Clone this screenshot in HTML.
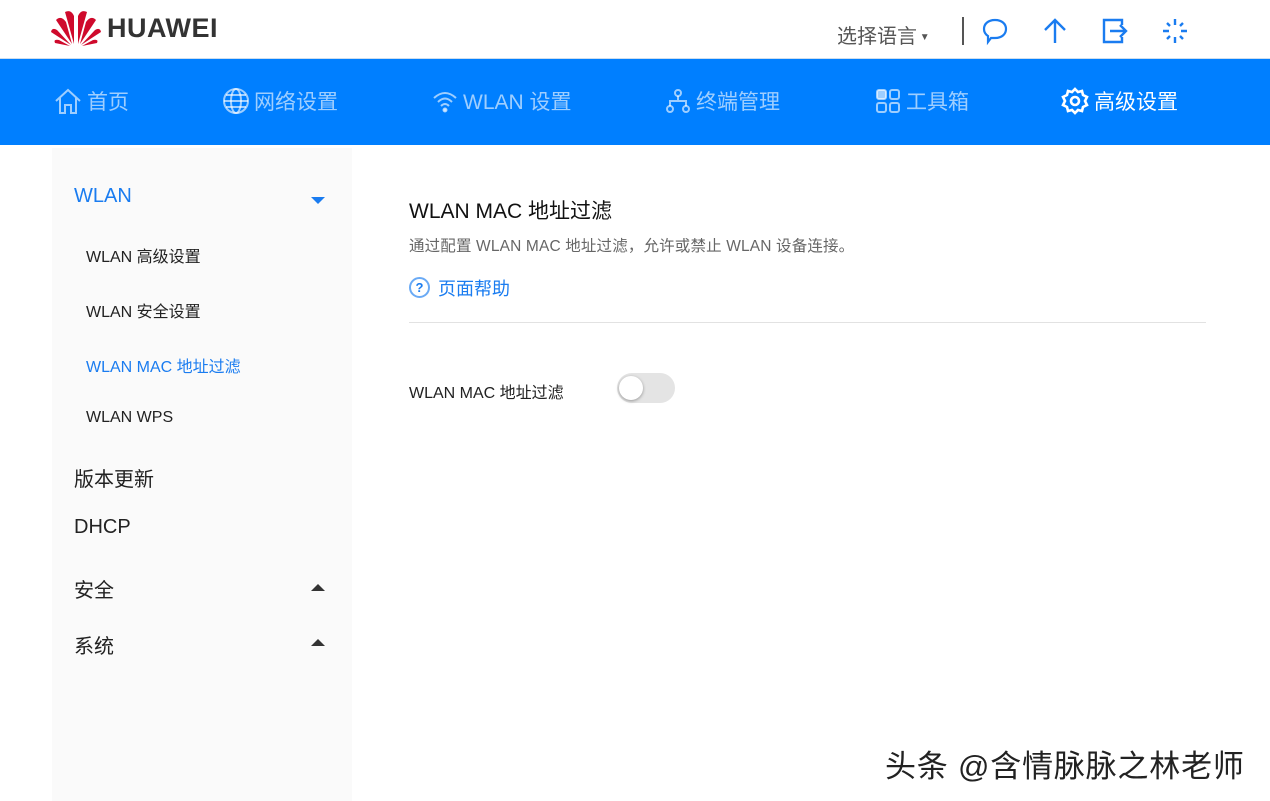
<!DOCTYPE html>
<html><head><meta charset="utf-8"><style>
*{margin:0;padding:0;box-sizing:border-box}
body{width:1270px;height:801px;overflow:hidden;background:#fff;font-family:"Liberation Sans","Noto Sans CJK SC",sans-serif;position:relative;color:#222}
.abs{position:absolute;white-space:nowrap}
.nav{position:absolute;left:0;top:58px;width:1270px;height:87px;background:#007fff;border-top:1px solid #cde;}
.ni{position:absolute;top:27px;font-size:21px;color:rgba(255,255,255,.62);display:flex;align-items:center;gap:4px}
.ni svg{stroke:rgba(255,255,255,.62);fill:none;stroke-width:2}
.side{position:absolute;left:52px;top:148px;width:300px;height:653px;background:#fafafa}
.s1{font-size:20px;color:#222}
.s2{font-size:16px;color:#222}
</style></head><body>
<svg class="abs" style="left:51px;top:8px" width="50" height="38" viewBox="0 0 50 38">
<g fill="#cf0a2c">
<path d="M23 36 L14 4 Q20 1 23 8Z"/><path d="M27 36 L36 4 Q30 1 27 8Z"/>
<path d="M21 36 L5 12 Q10 7 15 14Z"/><path d="M29 36 L45 12 Q40 7 35 14Z"/>
<path d="M20 37 L0 24 Q1 19 6 22Z"/><path d="M30 37 L50 24 Q49 19 44 22Z"/>
<path d="M19 38 L4 35 Q2 31 8 32Z"/><path d="M31 38 L46 35 Q48 31 42 32Z"/>
</g></svg>
<div class="abs" style="left:107px;top:13px;font-size:27px;font-weight:bold;color:#333;letter-spacing:0.5px">HUAWEI</div>
<div class="abs" style="left:837px;top:20px;font-size:20px;color:#555">选择语言<span style="font-size:10px;vertical-align:3px"> ▼</span></div>
<div class="abs" style="left:962px;top:17px;width:2px;height:28px;background:#555"></div>
<svg class="abs" style="left:980px;top:16px" width="30" height="30" viewBox="0 0 30 30" fill="none" stroke="#1a7cf0" stroke-width="2.2"><path d="M15 4 C22 4 26 8 26 13 C26 18 22 22 15 22 L11 22 L8 26 L8 20 C5 18 4 16 4 13 C4 8 8 4 15 4Z"/></svg>
<svg class="abs" style="left:1040px;top:16px" width="30" height="30" viewBox="0 0 30 30" fill="none" stroke="#1a7cf0" stroke-width="2.4"><path d="M15 27 V4 M5 14 L15 4 L25 14"/></svg>
<svg class="abs" style="left:1100px;top:16px" width="30" height="30" viewBox="0 0 30 30" fill="none" stroke="#1a7cf0" stroke-width="2.4"><path d="M22 9 V4 H4 V26 H22 V21 M10 15 H26 M20 9 L26 15 L20 21"/></svg>
<svg class="abs" style="left:1160px;top:16px" width="30" height="30" viewBox="0 0 30 30" fill="none" stroke="#1a7cf0" stroke-width="2.4"><path d="M15 3 V9 M15 21 V27 M3 15 H9 M21 15 H27 M7 7 L10 10 M20 20 L23 23 M23 7 L20 10 M10 20 L7 23"/></svg>
<div class="nav">
<div class="ni" style="left:53px"><svg width="30" height="30" viewBox="0 0 30 30"><path d="M3 15 L15 4 L27 15 M7 12 V27 H12 V19 H18 V27 H23 V12"/></svg>首页</div>
<div class="ni" style="left:222px"><svg width="28" height="28" viewBox="0 0 28 28"><circle cx="14" cy="14" r="12"/><ellipse cx="14" cy="14" rx="5" ry="12"/><path d="M2 14 H26 M4 8 H24 M4 20 H24"/></svg>网络设置</div>
<div class="ni" style="left:431px"><svg width="28" height="28" viewBox="0 0 28 28"><path d="M3 11 Q14 1 25 11 M7 15 Q14 8 21 15 M10 19 Q14 15 18 19"/><circle cx="14" cy="23" r="1.5" fill="rgba(255,255,255,.62)"/></svg>WLAN 设置</div>
<div class="ni" style="left:664px"><svg width="28" height="28" viewBox="0 0 28 28"><circle cx="14" cy="6" r="3"/><circle cx="6" cy="22" r="3"/><circle cx="22" cy="22" r="3"/><path d="M14 9 V14 M6 19 V14 H22 V19"/></svg>终端管理</div>
<div class="ni" style="left:874px"><svg width="28" height="28" viewBox="0 0 28 28"><rect x="3" y="3" width="9" height="9" rx="2" fill="rgba(255,255,255,.62)"/><rect x="16" y="3" width="9" height="9" rx="2"/><rect x="3" y="16" width="9" height="9" rx="2"/><rect x="16" y="16" width="9" height="9" rx="2"/></svg>工具箱</div>
<div class="ni" style="left:1060px;color:#fff"><svg width="30" height="30" viewBox="0 0 30 30" style="stroke:#fff;stroke-width:2.6"><circle cx="15" cy="15" r="4"/><path d="M15 3 L18 6 L22 5 L23 9 L27 11 L25 15 L27 19 L23 21 L22 25 L18 24 L15 27 L12 24 L8 25 L7 21 L3 19 L5 15 L3 11 L7 9 L8 5 L12 6Z"/></svg>高级设置</div>
</div>
<div class="side"></div>
<div class="abs s1" style="left:74px;top:185px;color:#1a7cf0">WLAN</div>
<div class="abs" style="left:311px;top:197px;width:0;height:0;border-left:7px solid transparent;border-right:7px solid transparent;border-top:7px solid #1a7cf0"></div>
<div class="abs s2" style="left:86px;top:243px">WLAN 高级设置</div>
<div class="abs s2" style="left:86px;top:298px">WLAN 安全设置</div>
<div class="abs s2" style="left:86px;top:353px;color:#1a7cf0">WLAN MAC 地址过滤</div>
<div class="abs s2" style="left:86px;top:409px">WLAN WPS</div>
<div class="abs s1" style="left:74px;top:463px">版本更新</div>
<div class="abs s1" style="left:74px;top:516px">DHCP</div>
<div class="abs s1" style="left:74px;top:574px">安全</div>
<div class="abs" style="left:311px;top:584px;border-left:7px solid transparent;border-right:7px solid transparent;border-bottom:7px solid #333"></div>
<div class="abs s1" style="left:74px;top:630px">系统</div>
<div class="abs" style="left:311px;top:639px;border-left:7px solid transparent;border-right:7px solid transparent;border-bottom:7px solid #333"></div>
<div class="abs" style="left:409px;top:195px;font-size:21px;color:#111">WLAN MAC 地址过滤</div>
<div class="abs" style="left:409px;top:234px;font-size:15.5px;color:#666;letter-spacing:0.15px">通过配置 WLAN MAC 地址过滤，允许或禁止 WLAN 设备连接。</div>
<div class="abs" style="left:409px;top:277px;width:21px;height:21px;border:2px solid #6aaaf5;border-radius:50%;color:#1a7cf0;font-size:13px;font-weight:bold;text-align:center;line-height:17px">?</div>
<div class="abs" style="left:438px;top:275px;font-size:18px;color:#1a7cf0">页面帮助</div>
<div class="abs" style="left:409px;top:322px;width:797px;height:1px;background:#e2e2e2"></div>
<div class="abs" style="left:409px;top:379px;font-size:16px;color:#222">WLAN MAC 地址过滤</div>
<div class="abs" style="left:617px;top:373px;width:58px;height:30px;border-radius:15px;background:#e4e4e4"></div>
<div class="abs" style="left:619px;top:376px;width:24px;height:24px;border-radius:50%;background:#fff;box-shadow:0 1px 3px rgba(0,0,0,.35)"></div>
<div class="abs" style="left:885px;top:741px;font-size:31px;color:#222;letter-spacing:0.8px">头条 @含情脉脉之林老师</div>
</body></html>
